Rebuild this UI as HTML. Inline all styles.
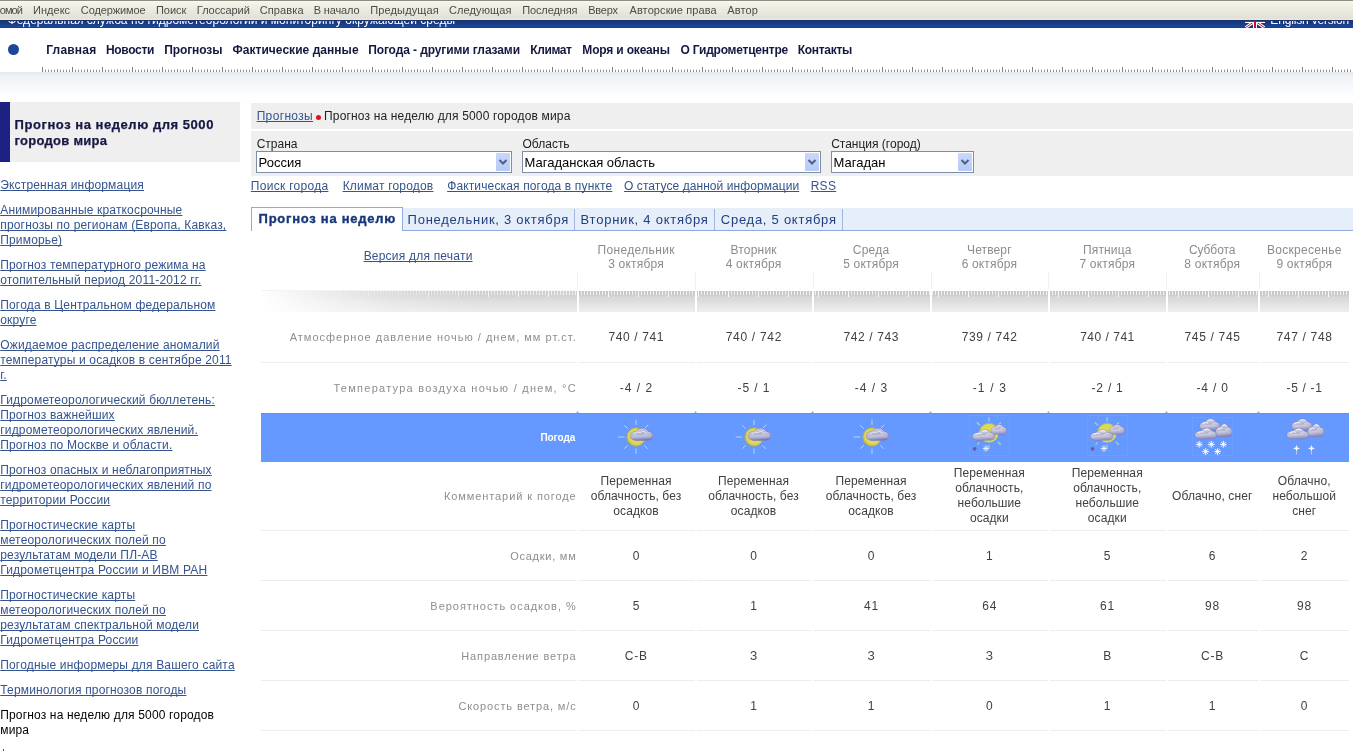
<!DOCTYPE html>
<html><head><meta charset="utf-8">
<style>
html,body{margin:0;padding:0;background:#fff;}
body{width:1353px;height:751px;overflow:hidden;position:relative;font-family:"Liberation Sans",sans-serif;will-change:transform;}
.t{position:absolute;white-space:pre;line-height:1;text-decoration-skip-ink:none;}
.b{position:absolute;}
.icon{position:absolute;}
</style></head><body>
<!-- toolbar -->
<div class="b" style="left:0;top:0;width:1353px;height:20px;background:linear-gradient(#8f8e82 0,#8f8e82 1px,#fbfbf3 1px,#f4f3ea 3px,#e9e8dc 12px,#e2e1d5 18px,#e8e4e6 19px,#eae6ea 20px);"></div>
<!-- blue bar -->
<div class="b" style="left:0;top:20px;width:1353px;height:8px;overflow:hidden;background:linear-gradient(#1a3060 0,#183578 1px,#1a3d82 4px,#1848a0 7px,#0e3a8a 8px);">
  <div style="position:absolute;left:0;top:1px;width:1353px;height:7px;overflow:hidden;"><span class="t" style="left:7.5px;top:-7.3px;font-size:12px;color:#fff;letter-spacing:0.03px">Федеральная служба по гидрометеорологии и мониторингу окружающей среды</span></div>
  <svg style="position:absolute;left:1245px;top:-6px;clip-path:inset(7px 0 0 0)" width="20" height="14" viewBox="0 0 20 14"><rect width="20" height="14" fill="#23317a"/><path d="M0 0L20 14M20 0L0 14" stroke="#fff" stroke-width="3"/><path d="M0 0L20 14M20 0L0 14" stroke="#c8102e" stroke-width="1"/><path d="M10 0V14M0 7H20" stroke="#fff" stroke-width="4"/><path d="M10 0V14M0 7H20" stroke="#c8102e" stroke-width="2"/></svg>
  <div style="position:absolute;left:0;top:1px;width:1353px;height:7px;overflow:hidden;"><span class="t" style="left:1270.3px;top:-7.3px;font-size:12px;color:#fff;letter-spacing:-0.17px">English version</span></div>
</div>
<!-- nav dot -->
<div class="b" style="left:8px;top:44px;width:11px;height:11px;border-radius:50%;background:#1a4797;"></div>
<!-- ruler -->
<svg class="b" style="left:42px;top:66px" width="1311" height="6">
  <defs><pattern id="rul" width="30" height="6" patternUnits="userSpaceOnUse">
    <rect x="0" y="1" width="1" height="5" fill="#808080"/>
    <rect x="3" y="3.7" width="1" height="2.3" fill="#8e8e8e"/><rect x="6" y="3.7" width="1" height="2.3" fill="#8e8e8e"/>
    <rect x="9" y="3.7" width="1" height="2.3" fill="#8e8e8e"/><rect x="12" y="3.7" width="1" height="2.3" fill="#8e8e8e"/>
    <rect x="15" y="3.2" width="1" height="2.8" fill="#888"/>
    <rect x="18" y="3.7" width="1" height="2.3" fill="#8e8e8e"/><rect x="21" y="3.7" width="1" height="2.3" fill="#8e8e8e"/>
    <rect x="24" y="3.7" width="1" height="2.3" fill="#8e8e8e"/><rect x="27" y="3.7" width="1" height="2.3" fill="#8e8e8e"/>
  </pattern></defs>
  <rect width="1311" height="6" fill="url(#rul)"/>
</svg>
<div class="b" style="left:0;top:72px;width:1353px;height:30px;background:linear-gradient(#e4e6e9 0,#eef1f4 4px,#f4f7fa 10px,#f8fafd 18px,#fdfeff 24px,#fff 28px);"></div>

<!-- left header box -->
<div class="b" style="left:0;top:102px;width:240px;height:60px;background:#efefef;"></div>
<div class="b" style="left:0;top:102px;width:10px;height:60px;background:#1f2182;"></div>

<!-- breadcrumb + selects band -->
<div class="b" style="left:251px;top:103px;width:1102px;height:25.5px;background:#efefef;"></div>
<div class="b" style="left:251px;top:130.5px;width:1102px;height:45.5px;background:#efefef;"></div>
<div class="b" style="left:315.9px;top:115.1px;width:5px;height:5px;border-radius:50%;background:#e2101a;"></div>

<!-- selects -->
<div class="b" style="left:256px;top:151px;width:254px;height:20px;border:1px solid #7b8fa6;background:#fff;"></div>
<div class="b" style="left:496px;top:153px;width:14px;height:18px;background:linear-gradient(#c9d8fc,#b7c9f5);border-radius:1px;"></div>
<div class="b" style="left:522px;top:151px;width:297px;height:20px;border:1px solid #7b8fa6;background:#fff;"></div>
<div class="b" style="left:805px;top:153px;width:14px;height:18px;background:linear-gradient(#c9d8fc,#b7c9f5);border-radius:1px;"></div>
<div class="b" style="left:831px;top:151px;width:141px;height:20px;border:1px solid #7b8fa6;background:#fff;"></div>
<div class="b" style="left:958px;top:153px;width:14px;height:18px;background:linear-gradient(#c9d8fc,#b7c9f5);border-radius:1px;"></div>
<svg class="b" style="left:496px;top:153px" width="14" height="17"><path d="M3.5 7L7 10.5L10.5 7" fill="none" stroke="#4d6185" stroke-width="2"/></svg>
<svg class="b" style="left:805px;top:153px" width="14" height="17"><path d="M3.5 7L7 10.5L10.5 7" fill="none" stroke="#4d6185" stroke-width="2"/></svg>
<svg class="b" style="left:958px;top:153px" width="14" height="17"><path d="M3.5 7L7 10.5L10.5 7" fill="none" stroke="#4d6185" stroke-width="2"/></svg>

<!-- tabs -->
<div class="b" style="left:402px;top:208px;width:951px;height:22px;background:#e6eefa;border-bottom:1px solid #8eaadc;"></div>
<div class="b" style="left:251px;top:207px;width:150px;height:23px;background:#fff;border:1px solid #8eaadc;border-bottom:none;"></div>
<div class="b" style="left:574px;top:209px;width:1px;height:21px;background:#9fb6de;"></div>
<div class="b" style="left:714px;top:209px;width:1px;height:21px;background:#9fb6de;"></div>
<div class="b" style="left:842px;top:209px;width:1px;height:21px;background:#9fb6de;"></div>

<!-- table structures -->
<div id="tbl"></div>
<div class="b" style="left:576.5px;top:271px;width:1px;height:19px;background:#f1f1f1;"></div>
<div class="b" style="left:695.0px;top:271px;width:1px;height:19px;background:#f1f1f1;"></div>
<div class="b" style="left:812.5px;top:271px;width:1px;height:19px;background:#f1f1f1;"></div>
<div class="b" style="left:930.5px;top:271px;width:1px;height:19px;background:#f1f1f1;"></div>
<div class="b" style="left:1048.0px;top:271px;width:1px;height:19px;background:#f1f1f1;"></div>
<div class="b" style="left:1166.0px;top:271px;width:1px;height:19px;background:#f1f1f1;"></div>
<div class="b" style="left:1258.5px;top:271px;width:1px;height:19px;background:#f1f1f1;"></div>
<div class="b" style="left:261px;top:291px;width:316px;height:21px;background:linear-gradient(90deg,rgba(255,255,255,1) 0,rgba(255,255,255,0.75) 40px,rgba(255,255,255,0.25) 130px,rgba(255,255,255,0) 220px),linear-gradient(#cdcdcd 0,#d4d4d4 5px,#dedede 10px,#ebebeb 21px);"></div>
<div class="b" style="left:579px;top:291px;width:116px;height:21px;background:linear-gradient(#c6c6c6 0,#cbcbcb 4px,#d8d8d8 6px,#dddddd 10px,#e6e6e6 15px,#eeeeee 21px);"></div>
<div class="b" style="left:697px;top:291px;width:115px;height:21px;background:linear-gradient(#c6c6c6 0,#cbcbcb 4px,#d8d8d8 6px,#dddddd 10px,#e6e6e6 15px,#eeeeee 21px);"></div>
<div class="b" style="left:814px;top:291px;width:116px;height:21px;background:linear-gradient(#c6c6c6 0,#cbcbcb 4px,#d8d8d8 6px,#dddddd 10px,#e6e6e6 15px,#eeeeee 21px);"></div>
<div class="b" style="left:932px;top:291px;width:116px;height:21px;background:linear-gradient(#c6c6c6 0,#cbcbcb 4px,#d8d8d8 6px,#dddddd 10px,#e6e6e6 15px,#eeeeee 21px);"></div>
<div class="b" style="left:1050px;top:291px;width:116px;height:21px;background:linear-gradient(#c6c6c6 0,#cbcbcb 4px,#d8d8d8 6px,#dddddd 10px,#e6e6e6 15px,#eeeeee 21px);"></div>
<div class="b" style="left:1168px;top:291px;width:90px;height:21px;background:linear-gradient(#c6c6c6 0,#cbcbcb 4px,#d8d8d8 6px,#dddddd 10px,#e6e6e6 15px,#eeeeee 21px);"></div>
<div class="b" style="left:1260px;top:291px;width:89px;height:21px;background:linear-gradient(#c6c6c6 0,#cbcbcb 4px,#d8d8d8 6px,#dddddd 10px,#e6e6e6 15px,#eeeeee 21px);"></div>
<svg class="b" style="left:261px;top:291px" width="1088" height="7"><defs><pattern id="teeth" width="3" height="7" patternUnits="userSpaceOnUse" x="2"><rect x="0" y="0" width="1" height="4" fill="#f6f6f6" opacity="0.9"/></pattern>
<pattern id="teeth2" width="30" height="7" patternUnits="userSpaceOnUse" x="17"><rect x="0" y="0" width="1" height="6" fill="#fafafa"/></pattern>
<linearGradient id="tf" x1="0" x2="1"><stop offset="0" stop-color="#fff" stop-opacity="0"/><stop offset="0.02" stop-color="#fff" stop-opacity="0.15"/><stop offset="0.2" stop-color="#fff" stop-opacity="0.8"/><stop offset="0.29" stop-color="#fff" stop-opacity="1"/></linearGradient>
<mask id="tm"><rect width="1088" height="7" fill="url(#tf)"/></mask></defs>
<g mask="url(#tm)"><rect width="1088" height="7" fill="url(#teeth)"/><rect width="1088" height="7" fill="url(#teeth2)"/></g></svg>
<div class="b" style="left:261px;top:290px;width:316px;height:1px;background:linear-gradient(90deg,#f2f2f2,#f8f8f8);"></div>
<div class="b" style="left:577px;top:289px;width:2px;height:24px;background:#fff;"></div>
<div class="b" style="left:695px;top:289px;width:2px;height:24px;background:#fff;"></div>
<div class="b" style="left:812px;top:289px;width:2px;height:24px;background:#fff;"></div>
<div class="b" style="left:930px;top:289px;width:2px;height:24px;background:#fff;"></div>
<div class="b" style="left:1048px;top:289px;width:2px;height:24px;background:#fff;"></div>
<div class="b" style="left:1166px;top:289px;width:2px;height:24px;background:#fff;"></div>
<div class="b" style="left:1258px;top:289px;width:2px;height:24px;background:#fff;"></div>
<div class="b" style="left:261px;top:361.5px;width:1088px;height:1px;background:#ededed;"></div>
<div class="b" style="left:577px;top:361.5px;width:2px;height:1px;background:#fff;"></div>
<div class="b" style="left:695px;top:361.5px;width:2px;height:1px;background:#fff;"></div>
<div class="b" style="left:812px;top:361.5px;width:2px;height:1px;background:#fff;"></div>
<div class="b" style="left:930px;top:361.5px;width:2px;height:1px;background:#fff;"></div>
<div class="b" style="left:1048px;top:361.5px;width:2px;height:1px;background:#fff;"></div>
<div class="b" style="left:1166px;top:361.5px;width:2px;height:1px;background:#fff;"></div>
<div class="b" style="left:1258px;top:361.5px;width:2px;height:1px;background:#fff;"></div>
<div class="b" style="left:261px;top:530.0px;width:1088px;height:1px;background:#ededed;"></div>
<div class="b" style="left:577px;top:530.0px;width:2px;height:1px;background:#fff;"></div>
<div class="b" style="left:695px;top:530.0px;width:2px;height:1px;background:#fff;"></div>
<div class="b" style="left:812px;top:530.0px;width:2px;height:1px;background:#fff;"></div>
<div class="b" style="left:930px;top:530.0px;width:2px;height:1px;background:#fff;"></div>
<div class="b" style="left:1048px;top:530.0px;width:2px;height:1px;background:#fff;"></div>
<div class="b" style="left:1166px;top:530.0px;width:2px;height:1px;background:#fff;"></div>
<div class="b" style="left:1258px;top:530.0px;width:2px;height:1px;background:#fff;"></div>
<div class="b" style="left:261px;top:580.0px;width:1088px;height:1px;background:#ededed;"></div>
<div class="b" style="left:577px;top:580.0px;width:2px;height:1px;background:#fff;"></div>
<div class="b" style="left:695px;top:580.0px;width:2px;height:1px;background:#fff;"></div>
<div class="b" style="left:812px;top:580.0px;width:2px;height:1px;background:#fff;"></div>
<div class="b" style="left:930px;top:580.0px;width:2px;height:1px;background:#fff;"></div>
<div class="b" style="left:1048px;top:580.0px;width:2px;height:1px;background:#fff;"></div>
<div class="b" style="left:1166px;top:580.0px;width:2px;height:1px;background:#fff;"></div>
<div class="b" style="left:1258px;top:580.0px;width:2px;height:1px;background:#fff;"></div>
<div class="b" style="left:261px;top:630.0px;width:1088px;height:1px;background:#ededed;"></div>
<div class="b" style="left:577px;top:630.0px;width:2px;height:1px;background:#fff;"></div>
<div class="b" style="left:695px;top:630.0px;width:2px;height:1px;background:#fff;"></div>
<div class="b" style="left:812px;top:630.0px;width:2px;height:1px;background:#fff;"></div>
<div class="b" style="left:930px;top:630.0px;width:2px;height:1px;background:#fff;"></div>
<div class="b" style="left:1048px;top:630.0px;width:2px;height:1px;background:#fff;"></div>
<div class="b" style="left:1166px;top:630.0px;width:2px;height:1px;background:#fff;"></div>
<div class="b" style="left:1258px;top:630.0px;width:2px;height:1px;background:#fff;"></div>
<div class="b" style="left:261px;top:680.0px;width:1088px;height:1px;background:#ededed;"></div>
<div class="b" style="left:577px;top:680.0px;width:2px;height:1px;background:#fff;"></div>
<div class="b" style="left:695px;top:680.0px;width:2px;height:1px;background:#fff;"></div>
<div class="b" style="left:812px;top:680.0px;width:2px;height:1px;background:#fff;"></div>
<div class="b" style="left:930px;top:680.0px;width:2px;height:1px;background:#fff;"></div>
<div class="b" style="left:1048px;top:680.0px;width:2px;height:1px;background:#fff;"></div>
<div class="b" style="left:1166px;top:680.0px;width:2px;height:1px;background:#fff;"></div>
<div class="b" style="left:1258px;top:680.0px;width:2px;height:1px;background:#fff;"></div>
<div class="b" style="left:261px;top:730.0px;width:1088px;height:1px;background:#ededed;"></div>
<div class="b" style="left:577px;top:730.0px;width:2px;height:1px;background:#fff;"></div>
<div class="b" style="left:695px;top:730.0px;width:2px;height:1px;background:#fff;"></div>
<div class="b" style="left:812px;top:730.0px;width:2px;height:1px;background:#fff;"></div>
<div class="b" style="left:930px;top:730.0px;width:2px;height:1px;background:#fff;"></div>
<div class="b" style="left:1048px;top:730.0px;width:2px;height:1px;background:#fff;"></div>
<div class="b" style="left:1166px;top:730.0px;width:2px;height:1px;background:#fff;"></div>
<div class="b" style="left:1258px;top:730.0px;width:2px;height:1px;background:#fff;"></div>
<div class="b" style="left:261px;top:413px;width:1088px;height:49px;background:linear-gradient(#6a8ee6 0,#6a8ee6 1px,#6699ff 1px,#6699ff 44px,#6b98ff 44px,#6b98ff 46px,#5f9cff 46px,#5f9cff 48px,#6699ff 48px);"></div>
<svg class="icon" style="left:611.8px;top:414.6px" width="48" height="44" viewBox="611.8 414.6 48 44"><g stroke="#cfe6ff" stroke-width="1" stroke-linecap="round" opacity="0.75"><path d="M635.8 419.6V424.1M635.8 448.6V453.1M617.8 436.6H623.8M624.3 425.1L627.3 428.1M644.3 445.1L647.3 448.1M624.3 448.1L627.3 445.1M647.8 424.6L644.8 427.6"/></g><defs><radialGradient id="sg635" cx="0.55" cy="0.45" r="0.6"><stop offset="0" stop-color="#ece46c"/><stop offset="0.75" stop-color="#dcd35a"/><stop offset="1" stop-color="#bab242"/></radialGradient></defs><circle cx="635.8" cy="436.6" r="9.2" fill="url(#sg635)" stroke="#b4ac3c" stroke-width="0.7"/><defs><linearGradient id="cg1" x1="0" y1="0" x2="0.25" y2="1"><stop offset="0" stop-color="#cfcfe6"/><stop offset="0.55" stop-color="#b4b4d0"/><stop offset="1" stop-color="#7674c0"/></linearGradient></defs><g fill="#7c78b0" opacity="0.55"><ellipse cx="636.3499999999999" cy="435.55" rx="6.71" ry="5.1"/><ellipse cx="642.2249999999999" cy="433.05" rx="6.945" ry="5.6"/><ellipse cx="647.63" cy="435.55" rx="5.534999999999999" ry="4.85"/><ellipse cx="641.52" cy="437.05" rx="10.94" ry="3.6"/></g><g fill="url(#cg1)"><ellipse cx="636.3499999999999" cy="435.55" rx="6.11" ry="4.5"/><ellipse cx="642.2249999999999" cy="433.05" rx="6.345000000000001" ry="5.0"/><ellipse cx="647.63" cy="435.55" rx="4.935" ry="4.25"/><ellipse cx="641.52" cy="437.05" rx="10.34" ry="3.0"/></g><path d="M633.8 433.6q3 -3 6 -1.5q3 -2.5 6 0" fill="none" stroke="#e8e8f4" stroke-width="1" opacity="0.8"/></svg>
<svg class="icon" style="left:730.4px;top:414.6px" width="48" height="44" viewBox="730.4 414.6 48 44"><g stroke="#cfe6ff" stroke-width="1" stroke-linecap="round" opacity="0.75"><path d="M754.4 419.6V424.1M754.4 448.6V453.1M736.4 436.6H742.4M742.9 425.1L745.9 428.1M762.9 445.1L765.9 448.1M742.9 448.1L745.9 445.1M766.4 424.6L763.4 427.6"/></g><defs><radialGradient id="sg754" cx="0.55" cy="0.45" r="0.6"><stop offset="0" stop-color="#ece46c"/><stop offset="0.75" stop-color="#dcd35a"/><stop offset="1" stop-color="#bab242"/></radialGradient></defs><circle cx="754.4" cy="436.6" r="9.2" fill="url(#sg754)" stroke="#b4ac3c" stroke-width="0.7"/><defs><linearGradient id="cg2" x1="0" y1="0" x2="0.25" y2="1"><stop offset="0" stop-color="#cfcfe6"/><stop offset="0.55" stop-color="#b4b4d0"/><stop offset="1" stop-color="#7674c0"/></linearGradient></defs><g fill="#7c78b0" opacity="0.55"><ellipse cx="754.9499999999999" cy="435.55" rx="6.71" ry="5.1"/><ellipse cx="760.8249999999999" cy="433.05" rx="6.945" ry="5.6"/><ellipse cx="766.23" cy="435.55" rx="5.534999999999999" ry="4.85"/><ellipse cx="760.12" cy="437.05" rx="10.94" ry="3.6"/></g><g fill="url(#cg2)"><ellipse cx="754.9499999999999" cy="435.55" rx="6.11" ry="4.5"/><ellipse cx="760.8249999999999" cy="433.05" rx="6.345000000000001" ry="5.0"/><ellipse cx="766.23" cy="435.55" rx="4.935" ry="4.25"/><ellipse cx="760.12" cy="437.05" rx="10.34" ry="3.0"/></g><path d="M752.4 433.6q3 -3 6 -1.5q3 -2.5 6 0" fill="none" stroke="#e8e8f4" stroke-width="1" opacity="0.8"/></svg>
<svg class="icon" style="left:847.8px;top:414.6px" width="48" height="44" viewBox="847.8 414.6 48 44"><g stroke="#cfe6ff" stroke-width="1" stroke-linecap="round" opacity="0.75"><path d="M871.8 419.6V424.1M871.8 448.6V453.1M853.8 436.6H859.8M860.3 425.1L863.3 428.1M880.3 445.1L883.3 448.1M860.3 448.1L863.3 445.1M883.8 424.6L880.8 427.6"/></g><defs><radialGradient id="sg871" cx="0.55" cy="0.45" r="0.6"><stop offset="0" stop-color="#ece46c"/><stop offset="0.75" stop-color="#dcd35a"/><stop offset="1" stop-color="#bab242"/></radialGradient></defs><circle cx="871.8" cy="436.6" r="9.2" fill="url(#sg871)" stroke="#b4ac3c" stroke-width="0.7"/><defs><linearGradient id="cg3" x1="0" y1="0" x2="0.25" y2="1"><stop offset="0" stop-color="#cfcfe6"/><stop offset="0.55" stop-color="#b4b4d0"/><stop offset="1" stop-color="#7674c0"/></linearGradient></defs><g fill="#7c78b0" opacity="0.55"><ellipse cx="872.3499999999999" cy="435.55" rx="6.71" ry="5.1"/><ellipse cx="878.2249999999999" cy="433.05" rx="6.945" ry="5.6"/><ellipse cx="883.63" cy="435.55" rx="5.534999999999999" ry="4.85"/><ellipse cx="877.52" cy="437.05" rx="10.94" ry="3.6"/></g><g fill="url(#cg3)"><ellipse cx="872.3499999999999" cy="435.55" rx="6.11" ry="4.5"/><ellipse cx="878.2249999999999" cy="433.05" rx="6.345000000000001" ry="5.0"/><ellipse cx="883.63" cy="435.55" rx="4.935" ry="4.25"/><ellipse cx="877.52" cy="437.05" rx="10.34" ry="3.0"/></g><path d="M869.8 433.6q3 -3 6 -1.5q3 -2.5 6 0" fill="none" stroke="#e8e8f4" stroke-width="1" opacity="0.8"/></svg>
<svg class="icon" style="left:964.3px;top:414.3px" width="50" height="44" viewBox="964.3 414.3 50 44"><g stroke="#b8e0c0" stroke-width="1.1" stroke-linecap="round" opacity="0.8"><path d="M989.3 417.8V421.8M977.3 422.8L979.8 425.3M1000.8 423.3L998.3 425.8M998.3 442.3L1000.8 444.8M979.3 442.8L978.3 444.8M989.3 445.3V448.3"/></g><circle cx="989.3" cy="433.3" r="9.6" fill="#dcd858"/><path d="M979.6999999999999 433.3A9.6 9.6 0 0 1 998.9 433.3" fill="none" stroke="#c2c040" stroke-width="0.8"/><defs><linearGradient id="cg4" x1="0" y1="0" x2="0.25" y2="1"><stop offset="0" stop-color="#e6dcea"/><stop offset="0.55" stop-color="#b4b4d0"/><stop offset="1" stop-color="#9890c4"/></linearGradient></defs><g fill="#7c78b0" opacity="0.55"><ellipse cx="995.5999999999999" cy="431.0" rx="4.76" ry="4.199999999999999"/><ellipse cx="999.5999999999999" cy="429.0" rx="4.92" ry="4.6"/><ellipse cx="1003.28" cy="431.0" rx="3.96" ry="4.0"/><ellipse cx="999.12" cy="432.2" rx="7.64" ry="3.0"/></g><g fill="url(#cg4)"><ellipse cx="995.5999999999999" cy="431.0" rx="4.16" ry="3.5999999999999996"/><ellipse cx="999.5999999999999" cy="429.0" rx="4.32" ry="4.0"/><ellipse cx="1003.28" cy="431.0" rx="3.36" ry="3.4000000000000004"/><ellipse cx="999.12" cy="432.2" rx="7.04" ry="2.4"/></g><defs><linearGradient id="cg5" x1="0" y1="0" x2="0.25" y2="1"><stop offset="0" stop-color="#e2e2ec"/><stop offset="0.55" stop-color="#b4b4d0"/><stop offset="1" stop-color="#8e8cc0"/></linearGradient></defs><g fill="#7c78b0" opacity="0.55"><ellipse cx="978.8499999999999" cy="436.81" rx="6.71" ry="4.38"/><ellipse cx="984.7249999999999" cy="434.71000000000004" rx="6.945" ry="4.8"/><ellipse cx="990.13" cy="436.81" rx="5.534999999999999" ry="4.17"/><ellipse cx="984.02" cy="438.07" rx="10.94" ry="3.12"/></g><g fill="url(#cg5)"><ellipse cx="978.8499999999999" cy="436.81" rx="6.11" ry="3.78"/><ellipse cx="984.7249999999999" cy="434.71000000000004" rx="6.345000000000001" ry="4.2"/><ellipse cx="990.13" cy="436.81" rx="4.935" ry="3.5700000000000003"/><ellipse cx="984.02" cy="438.07" rx="10.34" ry="2.52"/></g><path d="M976.03 434.71000000000004q2.82 -2.1 5.875 -0.525M982.375 431.56q2.82 -1.26 5.17 0.21" fill="none" stroke="#f4f4fa" stroke-width="1.1" opacity="0.9"/><circle cx="974.9" cy="449.1" r="1.9" fill="#6a58b0"/><g stroke="#eef2ff" stroke-width="0.9"><path d="M986.3 445.6V452.0M983.0999999999999 448.8H989.5M984.0999999999999 446.6L988.5 451.0M988.5 446.6L984.0999999999999 451.0"/></g><rect x="969.8" y="415.8" width="40" height="40" fill="none" stroke="#76a4ff" stroke-width="1" opacity="0.5"/></svg>
<svg class="icon" style="left:1082.4px;top:414.3px" width="50" height="44" viewBox="1082.4 414.3 50 44"><g stroke="#b8e0c0" stroke-width="1.1" stroke-linecap="round" opacity="0.8"><path d="M1107.4 417.8V421.8M1095.4 422.8L1097.9 425.3M1118.9 423.3L1116.4 425.8M1116.4 442.3L1118.9 444.8M1097.4 442.8L1096.4 444.8M1107.4 445.3V448.3"/></g><circle cx="1107.4" cy="433.3" r="9.6" fill="#dcd858"/><path d="M1097.8000000000002 433.3A9.6 9.6 0 0 1 1117.0 433.3" fill="none" stroke="#c2c040" stroke-width="0.8"/><defs><linearGradient id="cg6" x1="0" y1="0" x2="0.25" y2="1"><stop offset="0" stop-color="#e6dcea"/><stop offset="0.55" stop-color="#b4b4d0"/><stop offset="1" stop-color="#9890c4"/></linearGradient></defs><g fill="#7c78b0" opacity="0.55"><ellipse cx="1113.7" cy="431.0" rx="4.76" ry="4.199999999999999"/><ellipse cx="1117.7" cy="429.0" rx="4.92" ry="4.6"/><ellipse cx="1121.38" cy="431.0" rx="3.96" ry="4.0"/><ellipse cx="1117.22" cy="432.2" rx="7.64" ry="3.0"/></g><g fill="url(#cg6)"><ellipse cx="1113.7" cy="431.0" rx="4.16" ry="3.5999999999999996"/><ellipse cx="1117.7" cy="429.0" rx="4.32" ry="4.0"/><ellipse cx="1121.38" cy="431.0" rx="3.36" ry="3.4000000000000004"/><ellipse cx="1117.22" cy="432.2" rx="7.04" ry="2.4"/></g><defs><linearGradient id="cg7" x1="0" y1="0" x2="0.25" y2="1"><stop offset="0" stop-color="#e2e2ec"/><stop offset="0.55" stop-color="#b4b4d0"/><stop offset="1" stop-color="#8e8cc0"/></linearGradient></defs><g fill="#7c78b0" opacity="0.55"><ellipse cx="1096.95" cy="436.81" rx="6.71" ry="4.38"/><ellipse cx="1102.825" cy="434.71000000000004" rx="6.945" ry="4.8"/><ellipse cx="1108.23" cy="436.81" rx="5.534999999999999" ry="4.17"/><ellipse cx="1102.1200000000001" cy="438.07" rx="10.94" ry="3.12"/></g><g fill="url(#cg7)"><ellipse cx="1096.95" cy="436.81" rx="6.11" ry="3.78"/><ellipse cx="1102.825" cy="434.71000000000004" rx="6.345000000000001" ry="4.2"/><ellipse cx="1108.23" cy="436.81" rx="4.935" ry="3.5700000000000003"/><ellipse cx="1102.1200000000001" cy="438.07" rx="10.34" ry="2.52"/></g><path d="M1094.13 434.71000000000004q2.82 -2.1 5.875 -0.525M1100.4750000000001 431.56q2.82 -1.26 5.17 0.21" fill="none" stroke="#f4f4fa" stroke-width="1.1" opacity="0.9"/><circle cx="1093.0" cy="449.1" r="1.9" fill="#6a58b0"/><g stroke="#eef2ff" stroke-width="0.9"><path d="M1104.4 445.6V452.0M1101.2 448.8H1107.6000000000001M1102.2 446.6L1106.6000000000001 451.0M1106.6000000000001 446.6L1102.2 451.0"/></g><rect x="1087.9" y="415.8" width="40" height="40" fill="none" stroke="#76a4ff" stroke-width="1" opacity="0.5"/></svg>
<svg class="icon" style="left:1186px;top:414px" width="50" height="46" viewBox="1186 414 50 46"><defs><linearGradient id="cg8" x1="0" y1="0" x2="0.25" y2="1"><stop offset="0" stop-color="#dcdcec"/><stop offset="0.55" stop-color="#b4b4d0"/><stop offset="1" stop-color="#8c8abe"/></linearGradient></defs><g fill="#7c78b0" opacity="0.55"><ellipse cx="1205.3" cy="426.13" rx="6.06" ry="4.739999999999999"/><ellipse cx="1210.55" cy="423.83" rx="6.27" ry="5.2"/><ellipse cx="1215.38" cy="426.13" rx="5.01" ry="4.51"/><ellipse cx="1209.92" cy="427.51" rx="9.84" ry="3.36"/></g><g fill="url(#cg8)"><ellipse cx="1205.3" cy="426.13" rx="5.46" ry="4.14"/><ellipse cx="1210.55" cy="423.83" rx="5.67" ry="4.6000000000000005"/><ellipse cx="1215.38" cy="426.13" rx="4.41" ry="3.91"/><ellipse cx="1209.92" cy="427.51" rx="9.24" ry="2.76"/></g><path d="M1202.78 423.83q2.52 -2.3000000000000003 5.25 -0.5750000000000001M1208.45 420.38q2.52 -1.38 4.62 0.23" fill="none" stroke="#f4f4fa" stroke-width="1.1" opacity="0.9"/><defs><linearGradient id="cg9" x1="0" y1="0" x2="0.25" y2="1"><stop offset="0" stop-color="#d8d8ea"/><stop offset="0.55" stop-color="#b4b4d0"/><stop offset="1" stop-color="#8684bc"/></linearGradient></defs><g fill="#7c78b0" opacity="0.55"><ellipse cx="1220.1" cy="432.06" rx="5.02" ry="5.279999999999999"/><ellipse cx="1224.35" cy="429.46" rx="5.1899999999999995" ry="5.8"/><ellipse cx="1228.26" cy="432.06" rx="4.17" ry="5.02"/><ellipse cx="1223.84" cy="433.62" rx="8.08" ry="3.72"/></g><g fill="url(#cg9)"><ellipse cx="1220.1" cy="432.06" rx="4.42" ry="4.68"/><ellipse cx="1224.35" cy="429.46" rx="4.59" ry="5.2"/><ellipse cx="1228.26" cy="432.06" rx="3.57" ry="4.42"/><ellipse cx="1223.84" cy="433.62" rx="7.48" ry="3.12"/></g><path d="M1218.06 429.46q2.04 -2.6 4.25 -0.65M1222.65 425.56q2.04 -1.56 3.74 0.26" fill="none" stroke="#f4f4fa" stroke-width="1.1" opacity="0.9"/><defs><linearGradient id="cg10" x1="0" y1="0" x2="0.25" y2="1"><stop offset="0" stop-color="#e2e2ee"/><stop offset="0.55" stop-color="#b4b4d0"/><stop offset="1" stop-color="#8e8cc0"/></linearGradient></defs><g fill="#7c78b0" opacity="0.55"><ellipse cx="1200.9" cy="435.01" rx="6.58" ry="4.38"/><ellipse cx="1206.65" cy="432.91" rx="6.8100000000000005" ry="4.8"/><ellipse cx="1211.94" cy="435.01" rx="5.43" ry="4.17"/><ellipse cx="1205.96" cy="436.27" rx="10.719999999999999" ry="3.12"/></g><g fill="url(#cg10)"><ellipse cx="1200.9" cy="435.01" rx="5.98" ry="3.78"/><ellipse cx="1206.65" cy="432.91" rx="6.210000000000001" ry="4.2"/><ellipse cx="1211.94" cy="435.01" rx="4.83" ry="3.5700000000000003"/><ellipse cx="1205.96" cy="436.27" rx="10.12" ry="2.52"/></g><path d="M1198.14 432.91q2.76 -2.1 5.75 -0.525M1204.35 429.76q2.76 -1.26 5.06 0.21" fill="none" stroke="#f4f4fa" stroke-width="1.1" opacity="0.9"/><g stroke="#f4f6ff" stroke-width="1"><path d="M1199.2 440.90000000000003V447.7M1195.8 444.3H1202.6000000000001M1196.752 441.85200000000003L1201.6480000000001 446.748M1201.6480000000001 441.85200000000003L1196.752 446.748"/></g><circle cx="1199.2" cy="444.3" r="1" fill="#fff"/><g stroke="#f4f6ff" stroke-width="1"><path d="M1211.3 440.90000000000003V447.7M1207.8999999999999 444.3H1214.7M1208.8519999999999 441.85200000000003L1213.748 446.748M1213.748 441.85200000000003L1208.8519999999999 446.748"/></g><circle cx="1211.3" cy="444.3" r="1" fill="#fff"/><g stroke="#f4f6ff" stroke-width="1"><path d="M1223.4 440.90000000000003V447.7M1220.0 444.3H1226.8000000000002M1220.952 441.85200000000003L1225.8480000000002 446.748M1225.8480000000002 441.85200000000003L1220.952 446.748"/></g><circle cx="1223.4" cy="444.3" r="1" fill="#fff"/><g stroke="#f4f6ff" stroke-width="1"><path d="M1205.6 448.20000000000005V455.0M1202.1999999999998 451.6H1209.0M1203.1519999999998 449.15200000000004L1208.048 454.048M1208.048 449.15200000000004L1203.1519999999998 454.048"/></g><circle cx="1205.6" cy="451.6" r="1" fill="#fff"/><g stroke="#f4f6ff" stroke-width="1"><path d="M1217.6 448.20000000000005V455.0M1214.1999999999998 451.6H1221.0M1215.1519999999998 449.15200000000004L1220.048 454.048M1220.048 449.15200000000004L1215.1519999999998 454.048"/></g><circle cx="1217.6" cy="451.6" r="1" fill="#fff"/><rect x="1192.5" y="417.5" width="40" height="38" fill="none" stroke="#74a2ff" stroke-width="1" opacity="0.6"/></svg>
<svg class="icon" style="left:1278px;top:414px" width="50" height="46" viewBox="1278 414 50 46"><defs><linearGradient id="cg11" x1="0" y1="0" x2="0.25" y2="1"><stop offset="0" stop-color="#dcdcec"/><stop offset="0.55" stop-color="#b4b4d0"/><stop offset="1" stop-color="#8c8abe"/></linearGradient></defs><g fill="#7c78b0" opacity="0.55"><ellipse cx="1297.3" cy="426.13" rx="6.06" ry="4.739999999999999"/><ellipse cx="1302.55" cy="423.83" rx="6.27" ry="5.2"/><ellipse cx="1307.38" cy="426.13" rx="5.01" ry="4.51"/><ellipse cx="1301.92" cy="427.51" rx="9.84" ry="3.36"/></g><g fill="url(#cg11)"><ellipse cx="1297.3" cy="426.13" rx="5.46" ry="4.14"/><ellipse cx="1302.55" cy="423.83" rx="5.67" ry="4.6000000000000005"/><ellipse cx="1307.38" cy="426.13" rx="4.41" ry="3.91"/><ellipse cx="1301.92" cy="427.51" rx="9.24" ry="2.76"/></g><path d="M1294.78 423.83q2.52 -2.3000000000000003 5.25 -0.5750000000000001M1300.45 420.38q2.52 -1.38 4.62 0.23" fill="none" stroke="#f4f4fa" stroke-width="1.1" opacity="0.9"/><defs><linearGradient id="cg12" x1="0" y1="0" x2="0.25" y2="1"><stop offset="0" stop-color="#d8d8ea"/><stop offset="0.55" stop-color="#b4b4d0"/><stop offset="1" stop-color="#8684bc"/></linearGradient></defs><g fill="#7c78b0" opacity="0.55"><ellipse cx="1312.1" cy="432.06" rx="5.02" ry="5.279999999999999"/><ellipse cx="1316.35" cy="429.46" rx="5.1899999999999995" ry="5.8"/><ellipse cx="1320.26" cy="432.06" rx="4.17" ry="5.02"/><ellipse cx="1315.84" cy="433.62" rx="8.08" ry="3.72"/></g><g fill="url(#cg12)"><ellipse cx="1312.1" cy="432.06" rx="4.42" ry="4.68"/><ellipse cx="1316.35" cy="429.46" rx="4.59" ry="5.2"/><ellipse cx="1320.26" cy="432.06" rx="3.57" ry="4.42"/><ellipse cx="1315.84" cy="433.62" rx="7.48" ry="3.12"/></g><path d="M1310.06 429.46q2.04 -2.6 4.25 -0.65M1314.65 425.56q2.04 -1.56 3.74 0.26" fill="none" stroke="#f4f4fa" stroke-width="1.1" opacity="0.9"/><defs><linearGradient id="cg13" x1="0" y1="0" x2="0.25" y2="1"><stop offset="0" stop-color="#e2e2ee"/><stop offset="0.55" stop-color="#b4b4d0"/><stop offset="1" stop-color="#8e8cc0"/></linearGradient></defs><g fill="#7c78b0" opacity="0.55"><ellipse cx="1292.9" cy="435.01" rx="6.58" ry="4.38"/><ellipse cx="1298.65" cy="432.91" rx="6.8100000000000005" ry="4.8"/><ellipse cx="1303.94" cy="435.01" rx="5.43" ry="4.17"/><ellipse cx="1297.96" cy="436.27" rx="10.719999999999999" ry="3.12"/></g><g fill="url(#cg13)"><ellipse cx="1292.9" cy="435.01" rx="5.98" ry="3.78"/><ellipse cx="1298.65" cy="432.91" rx="6.210000000000001" ry="4.2"/><ellipse cx="1303.94" cy="435.01" rx="4.83" ry="3.5700000000000003"/><ellipse cx="1297.96" cy="436.27" rx="10.12" ry="2.52"/></g><path d="M1290.14 432.91q2.76 -2.1 5.75 -0.525M1296.35 429.76q2.76 -1.26 5.06 0.21" fill="none" stroke="#f4f4fa" stroke-width="1.1" opacity="0.9"/><path d="M1296.5 444.7L1297.4 447.40000000000003L1300.1 448.3L1297.4 449.2L1296.5 451.90000000000003L1295.6 449.2L1292.9 448.3L1295.6 447.40000000000003z" fill="#f6f8ff"/><path d="M1296.5 451.90000000000003V454.40000000000003" stroke="#cfe0ff" stroke-width="0.8"/><path d="M1311.5 444.7L1312.4 447.40000000000003L1315.1 448.3L1312.4 449.2L1311.5 451.90000000000003L1310.6 449.2L1307.9 448.3L1310.6 447.40000000000003z" fill="#f6f8ff"/><path d="M1311.5 451.90000000000003V454.40000000000003" stroke="#cfe0ff" stroke-width="0.8"/></svg>
<div class="b" style="left:694.0px;top:411px;width:3px;height:2px;background:#9aaee0;clip-path:polygon(50% 0,100% 100%,0 100%);"></div>
<div class="b" style="left:811.0px;top:411px;width:3px;height:2px;background:#9aaee0;clip-path:polygon(50% 0,100% 100%,0 100%);"></div>
<div class="b" style="left:929.0px;top:411px;width:3px;height:2px;background:#9aaee0;clip-path:polygon(50% 0,100% 100%,0 100%);"></div>
<div class="b" style="left:1047.0px;top:411px;width:3px;height:2px;background:#9aaee0;clip-path:polygon(50% 0,100% 100%,0 100%);"></div>
<div class="b" style="left:1165.0px;top:411px;width:3px;height:2px;background:#9aaee0;clip-path:polygon(50% 0,100% 100%,0 100%);"></div>
<div class="b" style="left:1257.0px;top:411px;width:3px;height:2px;background:#9aaee0;clip-path:polygon(50% 0,100% 100%,0 100%);"></div>
<div class="b" style="left:576.0px;top:411px;width:3px;height:2px;background:#9aaee0;clip-path:polygon(50% 0,100% 100%,0 100%);"></div>

<span class="t" style="left:33.07px;top:4.69px;font-size:11px;color:#4b4b4b;letter-spacing:0.021px">Индекс</span>
<span class="t" style="left:80.87px;top:4.69px;font-size:11px;color:#4b4b4b;letter-spacing:-0.125px">Содержимое</span>
<span class="t" style="left:155.97px;top:4.69px;font-size:11px;color:#4b4b4b;letter-spacing:-0.056px">Поиск</span>
<span class="t" style="left:196.87px;top:4.69px;font-size:11px;color:#4b4b4b;letter-spacing:-0.071px">Глоссарий</span>
<span class="t" style="left:259.67px;top:4.69px;font-size:11px;color:#4b4b4b;letter-spacing:0.134px">Справка</span>
<span class="t" style="left:313.67px;top:4.69px;font-size:11px;color:#4b4b4b;letter-spacing:-0.128px">В начало</span>
<span class="t" style="left:370.37px;top:4.69px;font-size:11px;color:#4b4b4b;letter-spacing:0.109px">Предыдущая</span>
<span class="t" style="left:448.97px;top:4.69px;font-size:11px;color:#4b4b4b;letter-spacing:0.116px">Следующая</span>
<span class="t" style="left:522.17px;top:4.69px;font-size:11px;color:#4b4b4b;letter-spacing:-0.109px">Последняя</span>
<span class="t" style="left:588.17px;top:4.69px;font-size:11px;color:#4b4b4b;letter-spacing:-0.178px">Вверх</span>
<span class="t" style="left:629.47px;top:4.69px;font-size:11px;color:#4b4b4b;letter-spacing:0.101px">Авторские права</span>
<span class="t" style="left:727.37px;top:4.69px;font-size:11px;color:#4b4b4b;letter-spacing:0.117px">Автор</span>
<span class="t" style="left:-0.33px;top:4.69px;font-size:11px;color:#4b4b4b;letter-spacing:-0.898px">омой</span>
<span class="t" style="left:46.24px;top:44.24px;font-size:12px;color:#15173f;font-weight:700;letter-spacing:0.185px">Главная</span>
<span class="t" style="left:106.04px;top:44.24px;font-size:12px;color:#15173f;font-weight:700;letter-spacing:-0.335px">Новости</span>
<span class="t" style="left:164.24px;top:44.24px;font-size:12px;color:#15173f;font-weight:700;letter-spacing:-0.1px">Прогнозы</span>
<span class="t" style="left:232.44px;top:44.24px;font-size:12px;color:#15173f;font-weight:700;letter-spacing:0.04px">Фактические данные</span>
<span class="t" style="left:368.14px;top:44.24px;font-size:12px;color:#15173f;font-weight:700;letter-spacing:-0.101px">Погода - другими глазами</span>
<span class="t" style="left:530.34px;top:44.24px;font-size:12px;color:#15173f;font-weight:700;letter-spacing:-0.415px">Климат</span>
<span class="t" style="left:582.34px;top:44.24px;font-size:12px;color:#15173f;font-weight:700;letter-spacing:-0.176px">Моря и океаны</span>
<span class="t" style="left:680.54px;top:44.24px;font-size:12px;color:#15173f;font-weight:700;letter-spacing:-0.227px">О Гидрометцентре</span>
<span class="t" style="left:797.84px;top:44.24px;font-size:12px;color:#15173f;font-weight:700;letter-spacing:-0.311px">Контакты</span>
<span class="t" style="left:14.61px;top:118.40px;font-size:13px;color:#171845;font-weight:700;letter-spacing:0.543px;-webkit-text-stroke:0.25px #171845">Прогноз на неделю для 5000</span>
<span class="t" style="left:14.61px;top:134.00px;font-size:13px;color:#171845;font-weight:700;letter-spacing:0.263px;-webkit-text-stroke:0.25px #171845">городов мира</span>
<span class="t" style="left:0.24px;top:178.84px;font-size:12px;color:#34548f;letter-spacing:0.17px;text-decoration:underline">Экстренная информация</span>
<span class="t" style="left:0.24px;top:203.84px;font-size:12px;color:#34548f;letter-spacing:0.17px;text-decoration:underline">Анимированные краткосрочные</span>
<span class="t" style="left:0.24px;top:218.84px;font-size:12px;color:#34548f;letter-spacing:0.17px;text-decoration:underline">прогнозы по регионам (Европа, Кавказ,</span>
<span class="t" style="left:0.24px;top:233.84px;font-size:12px;color:#34548f;letter-spacing:0.17px;text-decoration:underline">Приморье)</span>
<span class="t" style="left:0.24px;top:258.84px;font-size:12px;color:#34548f;letter-spacing:0.17px;text-decoration:underline">Прогноз температурного режима на</span>
<span class="t" style="left:0.24px;top:273.84px;font-size:12px;color:#34548f;letter-spacing:0.17px;text-decoration:underline">отопительный период 2011-2012 гг.</span>
<span class="t" style="left:0.24px;top:298.84px;font-size:12px;color:#34548f;letter-spacing:0.17px;text-decoration:underline">Погода в Центральном федеральном</span>
<span class="t" style="left:0.24px;top:313.84px;font-size:12px;color:#34548f;letter-spacing:0.17px;text-decoration:underline">округе</span>
<span class="t" style="left:0.24px;top:338.84px;font-size:12px;color:#34548f;letter-spacing:0.17px;text-decoration:underline">Ожидаемое распределение аномалий</span>
<span class="t" style="left:0.24px;top:353.84px;font-size:12px;color:#34548f;letter-spacing:0.17px;text-decoration:underline">температуры и осадков в сентябре 2011</span>
<span class="t" style="left:0.24px;top:368.84px;font-size:12px;color:#34548f;letter-spacing:0.17px;text-decoration:underline">г.</span>
<span class="t" style="left:0.24px;top:393.84px;font-size:12px;color:#34548f;letter-spacing:0.17px;text-decoration:underline">Гидрометеорологический бюллетень:</span>
<span class="t" style="left:0.24px;top:408.84px;font-size:12px;color:#34548f;letter-spacing:0.17px;text-decoration:underline">Прогноз важнейших</span>
<span class="t" style="left:0.24px;top:423.84px;font-size:12px;color:#34548f;letter-spacing:0.17px;text-decoration:underline">гидрометеорологических явлений.</span>
<span class="t" style="left:0.24px;top:438.84px;font-size:12px;color:#34548f;letter-spacing:0.17px;text-decoration:underline">Прогноз по Москве и области.</span>
<span class="t" style="left:0.24px;top:463.84px;font-size:12px;color:#34548f;letter-spacing:0.17px;text-decoration:underline">Прогноз опасных и неблагоприятных</span>
<span class="t" style="left:0.24px;top:478.84px;font-size:12px;color:#34548f;letter-spacing:0.17px;text-decoration:underline">гидрометеорологических явлений по</span>
<span class="t" style="left:0.24px;top:493.84px;font-size:12px;color:#34548f;letter-spacing:0.17px;text-decoration:underline">территории России</span>
<span class="t" style="left:0.24px;top:518.84px;font-size:12px;color:#34548f;letter-spacing:0.17px;text-decoration:underline">Прогностические карты</span>
<span class="t" style="left:0.24px;top:533.84px;font-size:12px;color:#34548f;letter-spacing:0.17px;text-decoration:underline">метеорологических полей по</span>
<span class="t" style="left:0.24px;top:548.84px;font-size:12px;color:#34548f;letter-spacing:0.17px;text-decoration:underline">результатам модели ПЛ-АВ</span>
<span class="t" style="left:0.24px;top:563.84px;font-size:12px;color:#34548f;letter-spacing:0.17px;text-decoration:underline">Гидрометцентра России и ИВМ РАН</span>
<span class="t" style="left:0.24px;top:588.84px;font-size:12px;color:#34548f;letter-spacing:0.17px;text-decoration:underline">Прогностические карты</span>
<span class="t" style="left:0.24px;top:603.84px;font-size:12px;color:#34548f;letter-spacing:0.17px;text-decoration:underline">метеорологических полей по</span>
<span class="t" style="left:0.24px;top:618.84px;font-size:12px;color:#34548f;letter-spacing:0.17px;text-decoration:underline">результатам спектральной модели</span>
<span class="t" style="left:0.24px;top:633.84px;font-size:12px;color:#34548f;letter-spacing:0.17px;text-decoration:underline">Гидрометцентра России</span>
<span class="t" style="left:0.24px;top:658.84px;font-size:12px;color:#34548f;letter-spacing:0.17px;text-decoration:underline">Погодные информеры для Вашего сайта</span>
<span class="t" style="left:0.24px;top:683.84px;font-size:12px;color:#34548f;letter-spacing:0.17px;text-decoration:underline">Терминология прогнозов погоды</span>
<span class="t" style="left:0.24px;top:708.84px;font-size:12px;color:#000;letter-spacing:0.16px">Прогноз на неделю для 5000 городов</span>
<span class="t" style="left:0.24px;top:723.84px;font-size:12px;color:#000;letter-spacing:0.16px">мира</span>
<span class="t" style="left:256.64px;top:110.14px;font-size:12px;color:#34548f;letter-spacing:0.352px;text-decoration:underline">Прогнозы</span>
<span class="t" style="left:324.04px;top:110.14px;font-size:12px;color:#222;letter-spacing:0.165px">Прогноз на неделю для 5000 городов мира</span>
<span class="t" style="left:256.64px;top:137.84px;font-size:12px;color:#222">Страна</span>
<span class="t" style="left:522.54px;top:137.84px;font-size:12px;color:#222">Область</span>
<span class="t" style="left:831.14px;top:137.84px;font-size:12px;color:#222">Станция (город)</span>
<span class="t" style="left:258.61px;top:155.50px;font-size:13px;color:#000">Россия</span>
<span class="t" style="left:524.61px;top:155.50px;font-size:13px;color:#000">Магаданская область</span>
<span class="t" style="left:833.61px;top:155.50px;font-size:13px;color:#000">Магадан</span>
<span class="t" style="left:250.84px;top:179.84px;font-size:12px;color:#34548f;letter-spacing:0.289px;text-decoration:underline">Поиск города</span>
<span class="t" style="left:342.64px;top:179.84px;font-size:12px;color:#34548f;letter-spacing:0.193px;text-decoration:underline">Климат городов</span>
<span class="t" style="left:447.14px;top:179.84px;font-size:12px;color:#34548f;letter-spacing:0.143px;text-decoration:underline">Фактическая погода в пункте</span>
<span class="t" style="left:624.04px;top:179.84px;font-size:12px;color:#34548f;letter-spacing:0.068px;text-decoration:underline">О статусе данной информации</span>
<span class="t" style="left:810.64px;top:179.84px;font-size:12px;color:#34548f;letter-spacing:0.316px;text-decoration:underline">RSS</span>
<span class="t" style="left:258.61px;top:211.90px;font-size:13px;color:#17377a;font-weight:700;letter-spacing:0.738px;-webkit-text-stroke:0.35px #17377a">Прогноз на неделю</span>
<span class="t" style="left:407.61px;top:213.40px;font-size:13px;color:#1e3f82;letter-spacing:0.739px">Понедельник, 3 октября</span>
<span class="t" style="left:580.61px;top:213.40px;font-size:13px;color:#1e3f82;letter-spacing:0.762px">Вторник, 4 октября</span>
<span class="t" style="left:720.81px;top:213.40px;font-size:13px;color:#1e3f82;letter-spacing:0.74px">Среда, 5 октября</span>
<span class="t" style="left:363.64px;top:249.84px;font-size:12px;color:#34548f;letter-spacing:0.21px;text-decoration:underline">Версия для печати</span>
<span class="t" style="left:597.54px;top:243.64px;font-size:12px;color:#8c8c8c;letter-spacing:0.347px">Понедельник</span>
<span class="t" style="left:608.14px;top:257.94px;font-size:12px;color:#8c8c8c;letter-spacing:0.217px">3 октября</span>
<span class="t" style="left:730.39px;top:243.64px;font-size:12px;color:#8c8c8c;letter-spacing:0.219px">Вторник</span>
<span class="t" style="left:725.69px;top:257.94px;font-size:12px;color:#8c8c8c;letter-spacing:0.204px">4 октября</span>
<span class="t" style="left:852.69px;top:243.64px;font-size:12px;color:#8c8c8c;letter-spacing:0.296px">Среда</span>
<span class="t" style="left:843.14px;top:257.94px;font-size:12px;color:#8c8c8c;letter-spacing:0.217px">5 октября</span>
<span class="t" style="left:967.04px;top:243.64px;font-size:12px;color:#8c8c8c;letter-spacing:0.131px">Четверг</span>
<span class="t" style="left:961.64px;top:257.94px;font-size:12px;color:#8c8c8c;letter-spacing:0.167px">6 октября</span>
<span class="t" style="left:1082.99px;top:243.64px;font-size:12px;color:#8c8c8c;letter-spacing:0.153px">Пятница</span>
<span class="t" style="left:1079.44px;top:257.94px;font-size:12px;color:#8c8c8c;letter-spacing:0.192px">7 октября</span>
<span class="t" style="left:1189.04px;top:243.64px;font-size:12px;color:#8c8c8c;letter-spacing:-0.113px">Суббота</span>
<span class="t" style="left:1184.34px;top:257.94px;font-size:12px;color:#8c8c8c;letter-spacing:0.217px">8 октября</span>
<span class="t" style="left:1267.04px;top:243.64px;font-size:12px;color:#8c8c8c;letter-spacing:0.28px">Воскресенье</span>
<span class="t" style="left:1276.49px;top:257.94px;font-size:12px;color:#8c8c8c;letter-spacing:0.179px">9 октября</span>
<span class="t" style="left:289.67px;top:331.69px;font-size:11px;color:#8e8e8e;letter-spacing:1.014px">Атмосферное давление ночью / днем, мм рт.ст.</span>
<span class="t" style="left:333.47px;top:382.69px;font-size:11px;color:#8e8e8e;letter-spacing:1.261px">Температура воздуха ночью / днем, °С</span>
<span class="t" style="left:443.97px;top:490.99px;font-size:11px;color:#8e8e8e;letter-spacing:0.91px">Комментарий к погоде</span>
<span class="t" style="left:510.17px;top:550.99px;font-size:11px;color:#8e8e8e;letter-spacing:0.751px">Осадки, мм</span>
<span class="t" style="left:430.37px;top:600.99px;font-size:11px;color:#8e8e8e;letter-spacing:0.962px">Вероятность осадков, %</span>
<span class="t" style="left:461.27px;top:650.89px;font-size:11px;color:#8e8e8e;letter-spacing:0.871px">Направление ветра</span>
<span class="t" style="left:458.47px;top:700.89px;font-size:11px;color:#8e8e8e;letter-spacing:0.873px">Скорость ветра, м/с</span>
<span class="t" style="left:540.40px;top:432.74px;font-size:10px;color:#fff;font-weight:700;letter-spacing:-0.044px">Погода</span>
<span class="t" style="left:608.59px;top:330.84px;font-size:12px;color:#404040;letter-spacing:0.597px">740 / 741</span>
<span class="t" style="left:725.69px;top:330.84px;font-size:12px;color:#404040;letter-spacing:0.697px">740 / 742</span>
<span class="t" style="left:843.49px;top:330.84px;font-size:12px;color:#404040;letter-spacing:0.622px">742 / 743</span>
<span class="t" style="left:961.64px;top:330.84px;font-size:12px;color:#404040;letter-spacing:0.659px">739 / 742</span>
<span class="t" style="left:1080.14px;top:330.84px;font-size:12px;color:#404040;letter-spacing:0.509px">740 / 741</span>
<span class="t" style="left:1184.44px;top:330.84px;font-size:12px;color:#404040;letter-spacing:0.684px">745 / 745</span>
<span class="t" style="left:1276.49px;top:330.84px;font-size:12px;color:#404040;letter-spacing:0.672px">747 / 748</span>
<span class="t" style="left:619.74px;top:381.84px;font-size:12px;color:#404040;letter-spacing:1.032px">-4 / 2</span>
<span class="t" style="left:737.59px;top:381.84px;font-size:12px;color:#404040;letter-spacing:0.892px">-5 / 1</span>
<span class="t" style="left:854.69px;top:381.84px;font-size:12px;color:#404040;letter-spacing:1.052px">-4 / 3</span>
<span class="t" style="left:972.69px;top:381.84px;font-size:12px;color:#404040;letter-spacing:1.172px">-1 / 3</span>
<span class="t" style="left:1091.59px;top:381.84px;font-size:12px;color:#404040;letter-spacing:0.772px">-2 / 1</span>
<span class="t" style="left:1196.44px;top:381.84px;font-size:12px;color:#404040;letter-spacing:0.832px">-4 / 0</span>
<span class="t" style="left:1286.49px;top:381.84px;font-size:12px;color:#404040;letter-spacing:0.679px">-5 / -1</span>
<span class="t" style="left:600.55px;top:474.54px;font-size:12px;color:#404040;letter-spacing:0.1px">Переменная</span>
<span class="t" style="left:590.78px;top:489.54px;font-size:12px;color:#404040;letter-spacing:0.1px">облачность, без</span>
<span class="t" style="left:613.30px;top:504.54px;font-size:12px;color:#404040;letter-spacing:0.1px">осадков</span>
<span class="t" style="left:718.05px;top:474.54px;font-size:12px;color:#404040;letter-spacing:0.1px">Переменная</span>
<span class="t" style="left:708.28px;top:489.54px;font-size:12px;color:#404040;letter-spacing:0.1px">облачность, без</span>
<span class="t" style="left:730.80px;top:504.54px;font-size:12px;color:#404040;letter-spacing:0.1px">осадков</span>
<span class="t" style="left:835.55px;top:474.54px;font-size:12px;color:#404040;letter-spacing:0.1px">Переменная</span>
<span class="t" style="left:825.78px;top:489.54px;font-size:12px;color:#404040;letter-spacing:0.1px">облачность, без</span>
<span class="t" style="left:848.30px;top:504.54px;font-size:12px;color:#404040;letter-spacing:0.1px">осадков</span>
<span class="t" style="left:953.85px;top:467.04px;font-size:12px;color:#404040;letter-spacing:0.1px">Переменная</span>
<span class="t" style="left:955.27px;top:482.04px;font-size:12px;color:#404040;letter-spacing:0.1px">облачность,</span>
<span class="t" style="left:957.54px;top:497.04px;font-size:12px;color:#404040;letter-spacing:0.1px">небольшие</span>
<span class="t" style="left:969.89px;top:512.04px;font-size:12px;color:#404040;letter-spacing:0.1px">осадки</span>
<span class="t" style="left:1071.75px;top:467.04px;font-size:12px;color:#404040;letter-spacing:0.1px">Переменная</span>
<span class="t" style="left:1073.17px;top:482.04px;font-size:12px;color:#404040;letter-spacing:0.1px">облачность,</span>
<span class="t" style="left:1075.44px;top:497.04px;font-size:12px;color:#404040;letter-spacing:0.1px">небольшие</span>
<span class="t" style="left:1087.79px;top:512.04px;font-size:12px;color:#404040;letter-spacing:0.1px">осадки</span>
<span class="t" style="left:1172.11px;top:489.54px;font-size:12px;color:#404040;letter-spacing:0.1px">Облачно, снег</span>
<span class="t" style="left:1277.87px;top:474.54px;font-size:12px;color:#404040;letter-spacing:0.1px">Облачно,</span>
<span class="t" style="left:1272.44px;top:489.54px;font-size:12px;color:#404040;letter-spacing:0.1px">небольшой</span>
<span class="t" style="left:1292.21px;top:504.54px;font-size:12px;color:#404040;letter-spacing:0.1px">снег</span>
<span class="t" style="left:632.66px;top:550.14px;font-size:12px;color:#404040;letter-spacing:0.8px">0</span>
<span class="t" style="left:750.16px;top:550.14px;font-size:12px;color:#404040;letter-spacing:0.8px">0</span>
<span class="t" style="left:867.66px;top:550.14px;font-size:12px;color:#404040;letter-spacing:0.8px">0</span>
<span class="t" style="left:985.96px;top:550.14px;font-size:12px;color:#404040;letter-spacing:0.8px">1</span>
<span class="t" style="left:1103.86px;top:550.14px;font-size:12px;color:#404040;letter-spacing:0.8px">5</span>
<span class="t" style="left:1208.86px;top:550.14px;font-size:12px;color:#404040;letter-spacing:0.8px">6</span>
<span class="t" style="left:1300.86px;top:550.14px;font-size:12px;color:#404040;letter-spacing:0.8px">2</span>
<span class="t" style="left:632.66px;top:600.14px;font-size:12px;color:#404040;letter-spacing:0.8px">5</span>
<span class="t" style="left:750.16px;top:600.14px;font-size:12px;color:#404040;letter-spacing:0.8px">1</span>
<span class="t" style="left:863.92px;top:600.14px;font-size:12px;color:#404040;letter-spacing:0.8px">41</span>
<span class="t" style="left:982.22px;top:600.14px;font-size:12px;color:#404040;letter-spacing:0.8px">64</span>
<span class="t" style="left:1100.12px;top:600.14px;font-size:12px;color:#404040;letter-spacing:0.8px">61</span>
<span class="t" style="left:1205.12px;top:600.14px;font-size:12px;color:#404040;letter-spacing:0.8px">98</span>
<span class="t" style="left:1297.12px;top:600.14px;font-size:12px;color:#404040;letter-spacing:0.8px">98</span>
<span class="t" style="left:624.86px;top:650.04px;font-size:12px;color:#404040;letter-spacing:0.8px">С-В</span>
<span class="t" style="left:749.88px;top:650.04px;font-size:12px;color:#404040;letter-spacing:0.8px">З</span>
<span class="t" style="left:867.38px;top:650.04px;font-size:12px;color:#404040;letter-spacing:0.8px">З</span>
<span class="t" style="left:985.67px;top:650.04px;font-size:12px;color:#404040;letter-spacing:0.8px">З</span>
<span class="t" style="left:1103.19px;top:650.04px;font-size:12px;color:#404040;letter-spacing:0.8px">В</span>
<span class="t" style="left:1201.06px;top:650.04px;font-size:12px;color:#404040;letter-spacing:0.8px">С-В</span>
<span class="t" style="left:1299.86px;top:650.04px;font-size:12px;color:#404040;letter-spacing:0.8px">С</span>
<span class="t" style="left:632.66px;top:700.04px;font-size:12px;color:#404040;letter-spacing:0.8px">0</span>
<span class="t" style="left:750.16px;top:700.04px;font-size:12px;color:#404040;letter-spacing:0.8px">1</span>
<span class="t" style="left:867.66px;top:700.04px;font-size:12px;color:#404040;letter-spacing:0.8px">1</span>
<span class="t" style="left:985.96px;top:700.04px;font-size:12px;color:#404040;letter-spacing:0.8px">0</span>
<span class="t" style="left:1103.86px;top:700.04px;font-size:12px;color:#404040;letter-spacing:0.8px">1</span>
<span class="t" style="left:1208.86px;top:700.04px;font-size:12px;color:#404040;letter-spacing:0.8px">1</span>
<span class="t" style="left:1300.86px;top:700.04px;font-size:12px;color:#404040;letter-spacing:0.8px">0</span>
<div class="b" style="left:3px;top:749px;width:1px;height:2px;background:#555;"></div>
</body></html>
